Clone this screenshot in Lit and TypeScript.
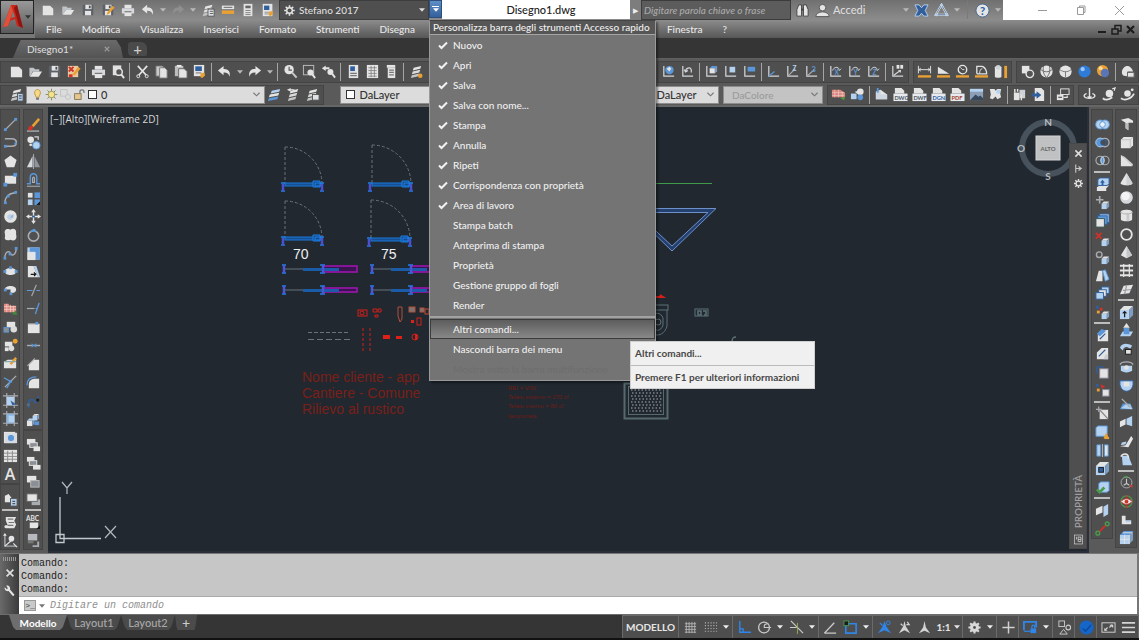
import { LitElement, html, css, svg, nothing, TemplateResult } from "lit";
import { customElement } from "lit/decorators.js";
import { classMap } from "lit/directives/class-map.js";

/* ---- drawing helpers for the 16 x 16 icon set ---- */
const W = "#e4e4e4";
const G = "#a9adb2";
const L = "#b4d2f0";
const B = "#5b97d8";
const D = "#2f5f9e";
const O = "#eaa133";
const R = "#cf3228";
const K = "#1b1b1b";

const P = (d: string, fill = W, stroke = "none", width = 1) =>
  svg`<path d=${d} fill=${fill} stroke=${stroke} stroke-width=${width}></path>`;
const S = (d: string, stroke = W, width = 1.3) => P(d, "none", stroke, width);
const C = (x: number, y: number, r: number, fill = W, stroke = "none", width = 1) =>
  svg`<circle cx=${x} cy=${y} r=${r} fill=${fill} stroke=${stroke} stroke-width=${width}></circle>`;
const Q = (x: number, y: number, w: number, h: number, fill = W, stroke = "none") =>
  svg`<rect x=${x} y=${y} width=${w} height=${h} fill=${fill} stroke=${stroke}></rect>`;
const T = (t: string, x: number, y: number, size: number, fill = W) =>
  svg`<text x=${x} y=${y} font-size=${size} font-weight="700" fill=${fill}>${t}</text>`;

const doc = P("M2 3H10.500L14 6.500V14H2Z");
const brush = P("M9 10l4-1 1 3-3 3-2-1z", O);
const disk = [P("M2 2H14V14H2Z", "#5d6167"), Q(5, 2, 7, 5), Q(4.500, 9, 7, 5), Q(9, 3, 2, 3, "#4c5058")];
const printer = [Q(4, 2, 8, 4), P("M1 6H15V12H1Z", "#d7d9dc"), Q(4, 10, 8, 5), S("M4 10H12", "#777")];
const axes = S("M3 2V13H14", "#d3d6da");
const cube = (x: number, y: number, s: number, front = W, side = L) => [
  P(`M${x} ${y + s * 0.3}h${s * 0.7}v${s * 0.7}h-${s * 0.7}z`, front),
  P(`M${x} ${y + s * 0.3}l${s * 0.3}-${s * 0.3}h${s * 0.7}l-${s * 0.3} ${s * 0.3}z`, side),
  P(`M${x + s * 0.7} ${y + s * 0.3}l${s * 0.3}-${s * 0.3}v${s * 0.7}l-${s * 0.3} ${s * 0.3}z`, "#7f9dc0"),
];
const sheets = [P("M5 4l8-2-1 3-8 2z"), P("M4 8l8-2-1 3-8 2z", "#dcdcdc"), P("M3 12l8-2-1 3-8 2z", "#c6c6c6")];
const gear = [
  S("M8 1.500V14.500M1.500 8H14.500M3.400 3.400L12.600 12.600M12.600 3.400L3.400 12.600", W, 2),
  C(8, 8, 4.300, W),
  C(8, 8, 2.500, "#4f4f4f"),
];
const ruler = P("M1 12H15V14.500H1Z", O);
const tag = (t: string, c: string) => [P("M2 1h7l3 3v3H2z"), Q(0.500, 7, 15, 8, "#e7eaee"), T(t, 1.500, 13.500, 6, c)];

const ICONS: Record<string, unknown> = {
  nuovo: doc,
  apri: [P("M1.500 13V4H6L7.500 5.500H12V8H5L2.500 13Z", "#bfc2c6"), P("M2 13.500L5.500 8H15L11.500 13.500Z")],
  salva: disk,
  salvaNome: [disk, P("M7 11L13 3l2.500 2L9 12.500l-2.500.8z", O)],
  chiudiDis: [Q(2, 2, 11, 12, "#e8c9a0"), S("M3 3l5 5M8 3l-5 5", R, 2), P("M7 11L13 3l2.500 2L9 12.500z", O), Q(3, 11, 4, 3, R)],
  stampa: printer,
  anteprima: [P("M3 1.500H12V12H3Z", "#e0e0e0"), C(9.500, 8.500, 3.600, "#555", W, 1.600), S("M12 11l3 4", W, 2)],
  annulla: [P("M1 7L7 2V5.300C12 5 14.500 8 13.500 13.500C12.500 10 10.500 8.800 7 9V12Z")],
  ripeti: [P("M15 7L9 2V5.300C4 5 1.500 8 2.500 13.500C3.500 10 5.500 8.800 9 9V12Z")],
  ripetiOff: [P("M15 7L9 2V5.300C4 5 1.500 8 2.500 13.500C3.500 10 5.500 8.800 9 9V12Z", "#8f8f8f")],
  gruppo: [sheets, Q(8, 7, 7, 8, "#dfe3e8", "#555"), S("M10 9.500h4M10 12h4", "#555", 1)],
  riga: [P("M1 3H15V7H1Z", W), P("M1 8.500H15V12.500H1Z", O), S("M3 5H13", "#777")],
  calc: [Q(3, 1, 10, 14, W), Q(5, 3, 6, 3, "#666"), S("M5 8.500h6M5 11h6M5 13.200h6", "#777", 1)],
  foglio: [Q(2, 1, 11, 14, W), Q(3.500, 3, 6, 5, D), S("M4 10.500h5M4 12.500h5", "#888", 1), brush],
  ingranaggio: gear,
  taglia: [S("M3 2L12 12M13 2L4 12", W, 1.800), C(3.500, 13, 1.600, "none", W), C(12.500, 13, 1.600, "none", W)],
  copia: [P("M2 2h7l1 1v10H2z", "#c9c9c9", "#666"), P("M6 4h5.500L14 6.500V15H6z", W, "#777")],
  incolla: [Q(2, 2, 9, 11, "#bdbdbd"), Q(4, 1, 5, 2, "#eee"), P("M6 5h6l3 3v7H6z", W, "#666")],
  proprietaCopia: [Q(2, 1, 11, 12, W), Q(3.500, 2.500, 7, 5, D), S("M4 9.500h6", "#888"), brush],
  zoomReal: [C(6.500, 6, 5, W), S("M6.500 3v3.500h3", "#555", 1.200), S("M10 9.500l4.500 5", "#c9c9c9", 2.200)],
  zoomFin: [Q(1.500, 1.500, 11, 10, "none", "#bfbfbf"), C(9, 9, 3.200, W), S("M11 11l3 4", W, 2)],
  zoomPrec: [P("M1 4.500L5 1.500V3.500H9V5.500H5V7.500Z"), C(10, 8.500, 3.200, W), S("M12 10.500l3 4", W, 2)],
  propr: [Q(3, 1, 10, 14, W), Q(4.500, 2.500, 5, 5, D), S("M4.500 10h7M4.500 12.500h7", "#777")],
  centro: [Q(2, 1, 12, 14, W), S("M3.500 4h9M3.500 7h9M3.500 10h9M3.500 13h9M6.500 2v12M10 2v12", "#777", 0.800)],
  tavolozze: [P("M3 1h9v3H3z"), Q(4, 4, 8, 11, W), S("M5.500 6.500h5M5.500 9h5M5.500 11.500h5", "#777")],
  fogliSet: [sheets, C(12, 12.500, 2.400, O)],
  ucs: [axes, C(9, 6.500, 4.500, B), P("M6 5l3-2 2 2-2 3z", W)],
  ucsPrec: [axes, S("M6 8C6 4 11 3 12 6V9M4.500 6L6 8.500L8.500 7", "#d3d6da")],
  ucsFaccia: [axes, cube(6, 2, 8, W, B)],
  ucsOgg: [axes, Q(7, 3, 6, 6, L)],
  ucsVista: [axes, Q(6, 3, 8, 5, B)],
  ucsOrig: [axes, S("M3 13L9 8", B)],
  ucsZ: [axes, S("M3 13L11 5", G), T("Z", 8, 7, 7, L)],
  ucs3: [axes, S("M3 13L11 6", G), T("3", 8, 8, 8, B)],
  rotX: [axes, S("M5 7C6 3 11 2 12 6M10 5l2 2 2-2", "#d3d6da", 1), T("X", 7, 12, 7, B)],
  rotY: [axes, S("M5 7C6 3 11 2 12 6M10 5l2 2 2-2", "#d3d6da", 1), T("Y", 7, 12, 7, B)],
  rotZ: [axes, S("M5 7C6 3 11 2 12 6M10 5l2 2 2-2", "#d3d6da", 1), T("Z", 7, 12, 7, B)],
  ucsAppl: [axes, Q(7, 1, 3, 4), Q(11, 1, 3, 4), S("M4 12l7-5M9 7h2v2", "#d3d6da")],
  dist: [S("M1.500 2V10M14.500 2V10M2 6H14M4 4.500L2 6L4 7.500M12 4.500L14 6L12 7.500", W, 1), ruler],
  raggio: [P("M2 3L14 10.500H2Z"), ruler],
  angolo: [C(8, 6, 4.500, "none", W, 1.500), S("M8 6L5.500 3.500M8 6h2", W, 1), ruler],
  area: [S("M3 10.500V2.500H9M9 2.500C12 4 13.500 7 13.500 10.500H3", W, 1.400), S("M6 10C6 7 7 5.500 9 4.500", W, 1), ruler],
  volume: [P("M2 3.500C2 1.500 9 1.500 9 3.500V13.500C9 15 2 15 2 13.500Z"), C(5.500, 3.500, 2.500, "#cfd3d8"), Q(12, 2, 3, 13, O)],
  wire2d: [Q(2, 2, 8, 8, W), C(10.500, 10.500, 4, "#555", W, 1.500)],
  wire3d: [C(8, 8, 6.500, W), S("M2 6C6 9 10 9 14 6M8 14.500C4 10 4 6 5 2M8 14.500C12 10 12 6 11 2", "#666", 1)],
  nascosto: [C(8, 8, 6.500, W), S("M2 6C6 9 10 9 14 6M8 14V8", "#777", 1)],
  realistico: [C(8, 8, 6.500, "#2f7bd8"), C(6, 5.500, 2.200, "#9cc6f5")],
  concettuale: [C(7, 7, 6, O), C(9.500, 9.500, 4.500, "#5a74b8"), C(5, 4.500, 2, "#f8dc9a")],
  gestVis: [P("M2 9C2 4 6 2 8 2S13 4 14 8H8V13C4 13 2 12 2 9Z"), Q(8, 9, 7, 5, W, "#666")],
  layer: [sheets, Q(9, 7, 6, 8, L, "#555"), S("M10.500 9.500h3M10.500 12h3", "#555")],
  layOgg: [P("M5 4l9-2-1 3-9 2z", L), P("M3 8l10-2-1 3-10 2z"), P("M2 12l10-2-1 3-10 2z", B)],
  layPrec: [sheets, P("M1 3l4-2v4z", W), S("M4 3h5", W)],
  layStati: [sheets, Q(8, 8, 7, 6, "#dfe3e8", "#555")],
  lampada: [P("M4.500 6C4.500 0.500 11.500 0.500 11.500 6C11.500 8.500 10 9 9.700 11.500H6.300C6 9 4.500 8.500 4.500 6Z", "#f7d98a", "#b98a2c"), Q(6.300, 12, 3.500, 2.500, "#777")],
  sole: [S("M8 .8V15.200M.8 8H15.200M3 3L13 13M13 3L3 13", "#8a8f5a", 1.200), C(8, 8, 4, "#f7e28a", "#8a8f5a")],
  congela: [Q(2, 2, 8, 8, "none", "#bdbdbd"), C(11, 11, 3, "#ddd", "#bdbdbd")],
  lucchetto: [Q(2, 7, 8, 7, "#e7c58c", "#7a6a4a"), S("M8.500 7V4.500C8.500 1.500 13.500 1.500 13.500 4.500V6", "#777", 1.500)],
  tratteggioEd: [P("M1 3h9l5 3v5H1z", "#d9867e"), S("M1 6h13M1 9h13M4 3v8M8 3v8M12 5v6", "#f2c9c5", 0.700), P("M10 12l5-2-1 4z", "#4e9a3f")],
  polEd: [Q(1, 7, 6, 6, L), C(11, 5, 3.500, W), C(11, 11, 3, B), P("M5 5l4-1v4z", W)],
  xr: [P("M2 5L7 3L14 8V13H2Z"), P("M2 5L7 3V8H14V13H2Z", "#cdd6e0"), Q(3, 1, 2, 5, B)],
  dwf: tag("DWG", "#4a5868"),
  dwfx: tag("DWF", "#4a5868"),
  dgn: tag("DGN", "#2a5fa8"),
  pdf: tag("PDF", "#a03c2a"),
  immagine: [Q(1, 2, 14, 12, "#8c9fb6"), P("M1 14L7 8L10 10.500L12 9L15 12V14Z", "#39495c"), Q(1, 2, 14, 3, L)],
  nuvola: [P("M2 2h5l1 2 2-2h4l-1 5 1 4-4 2-2-3-3 3-3-1 1-4z"), Q(9, 3, 4, 4, L)],
  blocco: [Q(2, 6, 6, 8, W), Q(8, 3, 6, 9, "#cfd3d8"), S("M3 2v4M6 2v3M10 8v6", W, 1.500)],
  export: [P("M4 1h7l3 3v11H4z"), P("M1 7H6V4.500L11 8.500L6 12.500V10H1Z", D)],
  ritaglio: [Q(6, 2, 9, 6, "none", W), Q(2, 8, 7, 6, W), S("M9 11h4V9", W), S("M3.500 11h4", "#555")],
  orbita: [S("M8 1V12M8 12l-2-2M8 12l2-2", W, 1.500), S("M5 7C1 8 1 12 8 12S15 8 11 7", W, 1.500)],
  orbita2: [C(9, 7, 4, W), S("M2 12C4 14 8 14 12 11", W, 2), S("M12 2l3-1-1 3", W)],
  orbita3: [C(8, 7, 3.500, W), S("M1 12C5 15 12 13 15 7", W, 1.700), C(13, 3, 1.500, W)],
  /* draw column */
  linea: [S("M2 14L14 2", G, 1.500), Q(1, 12, 3, 3, B), Q(12, 1, 3, 3, B)],
  polilinea: [S("M2 4H9C16 4 16 12 9 12H2", G, 1.700), Q(1, 10.500, 3, 3, B), C(13.500, 9, 1.400, B)],
  poligono: P("M8 1.500L14.500 6.500L12 14H4L1.500 6.500Z"),
  rettangolo: [Q(2, 4, 12, 8.500), Q(11, 1, 4, 4, B), Q(0.500, 11.500, 4, 4, B)],
  arco: [S("M2 14C2 7 7 3 14 3", G, 1.500), Q(1, 12, 3, 3, B), Q(12, 1, 3, 3, B), Q(4, 5, 3, 3, B)],
  cerchio: [C(8, 8, 6.700), C(7.500, 8.500, 3, "#bcd0e6"), P("M7.500 9L11 5V9Z", "#8fb4de")],
  rev: P("M2 4C3 1 7 2 8 3C10 1 14 2 14 5C13.500 8 15 10 14 12C13 15 10 14.500 8 13.500C5 15 1 14 2 11C3 9 1 6 2 4Z"),
  spline: [S("M2 13C2 5 7 5 8 8S14 10 14 3", G, 1.500), Q(.5, 11.500, 3, 3, B), Q(12.500, 1, 3, 3, B), Q(6, 7, 3, 3, B)],
  ellisse: [P("M2 8C2 3 14 3 14 8S2 13 2 8Z"), Q(.5, 6.500, 3, 3, B), Q(12.500, 6.500, 3, 3, B), Q(6.500, 2.500, 3, 3, B)],
  arcoEll: [P("M2 8C2 3 14 3 14 8C14 11 11 12 8 12V8H2Z"), Q(1, 7, 3, 3, B), Q(7, 11, 3, 3, B)],
  tratteggio: [P("M1 3h5l1 2h7v7H1z", "#e08a80"), S("M1 6h13M1 9h13M4 3v9M8 4v8M11 5v7", "#f6d6d2", .7), P("M9 14l5-4 1 5z", "#3c8a3a")],
  insBlocco: [Q(4, 3, 9, 6), C(11.500, 11, 3.500, "#dcdcdc"), Q(1, 9, 5, 5, "#8a8f95", B)],
  creaBlocco: [Q(2, 4, 8, 5), C(9, 11, 3, "#dcdcdc"), Q(2, 10, 4, 4, W), C(13, 3.500, 2.600, O)],
  regione: [P("M1 6l4-2h9v9H1z"), P("M7 8L13 1l2 2-6 6.500z", O), S("M1 6h13", "#8aa")],
  lineaC: [S("M2 14L14 2", G, 1.500), S("M1 4L8 8L4 15", B, 1.500), C(8, 8, 1.700, B)],
  confine: [S("M4 0V16M12 0V16M0 3H16M0 13H16", G, 1.200), Q(4, 4, 8, 9, L), P("M8 8l6 4-4 1z", D)],
  confine2: [S("M4 0V16M12 0V16M0 3H16M0 13H16", G, 1.200), Q(4, 3, 8, 10, "#8ab4e2"), Q(6, 5, 6, 7, L)],
  copertura: [Q(1, 2, 12, 12), Q(2, 3, 13, 11, "#d8dce2"), C(8.500, 8.500, 4, B, W)],
  tabella: [Q(1, 2, 14, 13), S("M1 5.500h14M1 9h14M1 12h14M5 3v12M10 3v12", "#8a8a8a", 1)],
  aggSel: [P("M2 4l4-2 3 4v5H2z"), Q(8, 7, 7, 8, L, "#555"), S("M10 10h3M10 12.500h3", "#555")],
  scorri: [P("M3 2h11l-2 4 2 4-2 4H3C1 14 1 11 3 11h2L3 6z"), S("M5 4.500h6M6 8h6M5 11h6", "#777")],
  assi: [S("M2 1V14H14", G, 1.500), C(9, 6, 3, W), S("M2 14L9 8M11 11l4 4", W), P("M2 0l2 3H0z", W)],
  /* modify column */
  cancella: [S("M1 15H14", G, 1.500), P("M6 9L13 1l2 2-7 8z", O), P("M3 10l3-1 2 2-2 3H2z", R)],
  copiaO: [C(5, 5, 3.500), C(11, 11, 4, L, B), C(5, 10.500, 1.500, W), S("M9 2h4v3", "#d3d6da")],
  specchio: [P("M7 2V14H1Z", "#d6d9dd"), P("M9 2V14H15Z", "#8f959c"), S("M8 0V16", G, 1)],
  offset: [S("M1 12.500h3.500V6C4.500 .5 11.500 .5 11.500 6V12.500H15", B, 1.500), S("M1 15.200h14M7 11V7C7 5 9 5 9 7V11z", G, 1.300)],
  serie: [Q(2, 2, 5, 5, W), Q(9, 1.500, 6, 6, B), Q(2, 9, 5, 6, L), Q(9, 9, 6, 6, B), P("M15 11V15H11Z", K)],
  sposta: [P("M8 0L10.500 3.500H5.500ZM8 16L5.500 12.500H10.500ZM0 8L3.500 5.500V10.500ZM16 8L12.500 10.500V5.500Z"), S("M8 3V13M3 8H13", W, 1.500), S("M6.500 8h3", D, 2)],
  ruota: [C(8, 8.500, 5.500, "none", G, 1.700), S("M5 4C7 2.500 9 2.500 11 4", B, 1.700), Q(7, 1, 3, 3, B)],
  scala: [Q(1.500, 1.500, 13, 13, L), P("M4 1.500H14.500V14.500H10V6H4Z", B), Q(1.500, 6.500, 8.500, 8.500)],
  stira: [P("M2 2h6l5 12H2z"), P("M8 2h3l4 12h-2z", L), S("M5 11h5M8.500 9l2 2-2 2", K)],
  taglia2: [S("M1 8H7M11 8H15", B, 1.300), S("M11 2L6 14", G, 1.300)],
  estendi: [S("M1 8H9", G, 1.300), S("M14 2L10 14", B, 1.500), S("M10 8h2", B)],
  spezza: [Q(2, 4, 12.500, 10), Q(10, 2, 3, 3, B), S("M2 4h8", "#999")],
  unisci: [S("M1 8H15", G, 1.500), P("M6 5.500L9 8L6 10.500ZM11 5.500L8 8L11 10.500Z", B)],
  cima: [P("M3 14V8L8 3H14V14Z"), S("M1.500 9.500L9.500 1.500", G, 1.200)],
  raccorda: [P("M3 14V10C3 6 6 4 10 4H14V14Z"), S("M1 11C1 5 5 2 11 2", B, 1.500)],
  fusione: [S("M3 15V9C4 5 8 5 9 8S13 8 13 2", D, 1.700), Q(1, 10, 3, 3, "#5b6b80"), Q(11, 5, 3, 3, K)],
  esplodi: [cube(1, 7, 8, W, L), cube(7, 2, 7, L, W), P("M9 10h5v4H9z", B)],
  ordine1: [Q(1, 1, 9, 6), Q(4, 5, 8, 5, "#8b9096", W), Q(8, 9, 7, 5, W)],
  ordine2: [Q(1, 1, 8, 5), Q(3.500, 5, 8, 5, "#8b9096", W), Q(7.500, 9.500, 8, 5, W)],
  ordine3: [Q(1, 2, 10, 7), Q(5, 7, 9, 7, "#8b9096", "#bbb")],
  ordine4: [Q(6, 8, 9, 6, "#a9adb2"), Q(1, 2, 11, 8, W, "#666")],
  ordTesto: [T("ABC", 0, 6.500, 7), Q(4, 8, 9, 6), P("M15 11V15H11Z", K)],
  ordTratt: [Q(2, 1, 10, 7, "#b6babf"), Q(2, 8, 6, 3, "#777"), S("M7 14h6V9", G, 2)],
  /* solid editing column */
  unione: [C(5.500, 8, 4.800, L, B), C(10.500, 8, 4.800, L, B), C(8, 8, 3, "#e9f2fb", B)],
  sottrai: [C(10.500, 8, 4.500, "none", G, 1.400), C(5.500, 8, 4.700, B, L), C(9, 8, 3, "#4a4d52", D)],
  interseca: [C(5.500, 8, 4.500, "none", G, 1.200), C(10.500, 8, 4.500, "none", G, 1.200), P("M8 4C10 6 10 10 8 12C6 10 6 6 8 4Z", B, L)],
  estrFaccia: [P("M2 11l3-2h10l-3 3v3H2z", W), P("M3 3l2-2h10v6l-2 2H3z", L, D), P("M8 3l2.500 3H9v3H7V6H5.500z", D)],
  spostaFaccia: [S("M5 1V9M1 5H9", G, 1.700), cube(7, 7, 8, L, W)],
  offFaccia: [Q(5, 1, 10, 9, L, D), Q(3, 3, 10, 9, B, D), Q(1, 6, 9, 9, W, "#355")],
  elimFaccia: [S("M1 1l6 6M7 1L1 7", R, 2), cube(7, 7, 8, L, W)],
  ruotaFaccia: [C(4.500, 5, 3, "none", G, 1.500), cube(7, 7, 8, L, W)],
  rastrema: [P("M1 14L4 3H8V14Z"), P("M8 3L11 2L15 12L11 14Z", L, B)],
  copiaFaccia: [Q(7, 1, 8, 7, L, D), Q(4, 4, 8, 7, W, D), Q(1, 7, 8, 7, L, D)],
  coloraFaccia: [Q(1, 1, 3, 3, D), Q(5, 3, 3, 3, R), Q(2, 6, 3, 3, O), cube(7, 7, 8, L, W)],
  raccSp: [P("M3 14V7L8 2H14V14Z", W), P("M2 6L7 1L12 3L5 9Z", B), S("M5 12l6-6", D)],
  cimaSp: [P("M2 14V7L7 2H14V14Z", W), S("M4 11l7-7", D, 1.200), P("M11 9h3v5H9z", "#c9ced5")],
  copiaSp: [Q(5, 4, 9, 10, W, "#889"), S("M2 2h8M2 2v7", D, 1.500)],
  colSp: [Q(1, 1, 3, 3, D), P("M6 1l5 3-4 2z", R), Q(2, 6, 3, 3, O), Q(8, 7, 7, 7, W, "#889")],
  imprimi: [Q(5, 4, 9, 10, W), S("M5 4l9 10", "#888"), S("M1 3.500h6M4 .5v6", G, 1.300)],
  pulisci: [P("M1 3l2-2h10v9l-2 2H1z", L, B), P("M12 8l3 6h-6z", O), Q(10, 13, 5, 2, O)],
  separa: [P("M2 2h4v12H2z", L, B), P("M10 2h4v12h-4z", W, B), S("M8 1V15", G)],
  guscio: [cube(1, 1, 14, L, W), Q(4, 7, 5, 5, D, K)],
  verifica: [P("M4 4l2-2h9v9l-2 2H4z", L, B), P("M1 11l2-2 2 2 4-4 2 2-6 6z", "#4b9a4e")],
  estraiIso: [P("M1 6l7-3v7l-7 3z"), P("M9 4l5-3v11l-5 3z", L)],
  torsione: [C(3, 13, 2, "none", "#4b9a4e", 1.500), C(13, 3, 2, "none", "#4b9a4e", 1.500), S("M5 11l6-6", R, 2)],
  /* modeling column */
  polisolido: [P("M2 3l8-2 5 3v2H10v8l-3-2V6z"), P("M7 6l3 1v7l-3-2z", "#bbb")],
  box: [P("M2 5L5 2H15V11L12 14H2Z"), S("M2 5H12V14M12 5L15 2", "#b5b8bc", .8)],
  cuneo: [P("M2 2L14 12V14H2Z"), P("M2 2l4 2 9 8-1 2z", "#cfcfcf")],
  cono: [P("M8 1L14.500 12C13 15 3 15 1.500 12Z"), P("M8 1L8 14C12 14.500 13.500 13.500 14.500 12Z", "#cfd1d4")],
  sfera: [C(8, 8, 6.700, "#d5d7da"), C(7, 6.500, 4.500, "#f3f3f3")],
  cilindro: [P("M2 4C2 1 14 1 14 4V12C14 15 2 15 2 12Z"), P("M8 6h3v8H8z", "#c6c8cb"), S("M2 4C2 7 14 7 14 4", "#bbb")],
  toro: C(8, 8, 5.700, "none", W, 1.900),
  piramide: [P("M8 1L14 11L8 14L2 11Z"), P("M8 1L14 11L8 14Z", "#c4c6c9")],
  elica: [S("M1 3h14M1 8h14M1 13h14", W, 2.200), S("M5 1v14M11 1v14", W, 1.300)],
  planare: [P("M5 4L15 3L11 12L1 13Z"), S("M4 9l9-1M8 4L6 13", "#9a9da1")],
  estrudi: [cube(1, 1, 14, L, W), S("M6 13V7M4 9l2-2 2 2", K)],
  premi: [P("M1 14l3-5h11l-3 5z", L), Q(5, 5, 6, 7, B), P("M8 0l3.500 5h-7z", W)],
  sweep: [P("M1 6C3 1 9 1 14 4L12 7C8 4 5 5 4 9Z", L), Q(7, 8, 6, 5, W, K)],
  rivoluz: [S("M1 5C3 1 13 1 15 5", G, 1.500), P("M2 6h12v5C12 14 4 14 2 11z", L), C(8, 8, 2.500, W)],
  loft: [P("M1 3h14v4C14 12 11 14 8 14S2 12 1 7z", L, D), Q(5, 4, 6, 5, W)],
  seziona: [P("M1 13l3-6h8l3 6z", B), P("M2 12l5-4h5l2 5z", L), S("M3 2l9 9", G, 1.500)],
  ispess: [P("M1 7l6-3v6l-6 3z"), P("M8 4l6-3v11l-6-2z", L)],
  piega: [P("M1 13l6-1 6-10 2 3-5 9z"), P("M3 9l5-1-1 3-5 1z", L)],
  solidoSup: [P("M3 4h7l4 10H4z", L), S("M2 5C4 1 11 1 10 7", W, 1.700)],
  gizmo1: [C(8, 8, 5.800, "none", G, 1), S("M8 9V4M8 9l3 2M8 9l-3 2", "#c9c9c9", 1.200), P("M11 11l4 0-1 3z", R), Q(6, 1, 3, 2, "#4b9a4e")],
  gizmo2: [C(8, 8, 6, "none", "#4b9a4e", 1.200), P("M2 8C5 4 11 4 14 8C11 12 5 12 2 8Z", W, R), C(8, 8, 2, R), S("M8 1v3M8 12v3", R, 1.500)],
  lPiccola: [P("M3 4h4v5h6v4H3z", W), P("M7 9h6l-1 2H7z", L)],
  mesh: [cube(1, 1, 14, L, B), S("M1 10h10M6 5v10M4 3h10M11 5V15", W, 1)],
  /* title bar */
  binocolo: [P("M2 14V7L4 2H7V14ZM9 14V2H12L14 7V14Z", "#e4e4e4", "#444"), S("M6.500 7h3", "#444", 2)],
  utente: [C(8, 5, 3.500, W, "#555"), P("M1 14.500C1 10.500 6 9.500 8 9.500S15 10.500 15 14.500Z", W, "#555")],
  exchange: [P("M1 2h4.500L8 5l2.500-3H15l-3 6 3 6h-4.500L8 11l-2.500 3H1l3-6z", "#335e9c", L)],
  a360: [P("M8 2L14 12.500H2Z", "none", W, 2.200), P("M8 2L14 12.500H2Z", "none", D, .8), C(8, 2.500, 1.600, L), C(2.500, 12.500, 1.600, L), C(13.500, 12.500, 1.600, L)],
  aiuto: [C(8, 8, 7, W, "#44648c"), T("?", 5.200, 12.500, 12, "#1f5fae")],
  /* status bar */
  griglia: S("M3.500 2V14M6.500 2V14M9.500 2V14M12.500 2V14M2 4H14M2 7H14M2 10H14M2 13H14", "#b9b9b9", .9),
  snap: svg`<path d="M2 3H15M2 6H15M2 9H15M2 12H15" stroke="#b0b0b0" stroke-width="1.200" stroke-dasharray="1.200 1.800"></path>`,
  orto: S("M3 1V13H15M3 9.500H6.500V13", "#2f86e8", 1.500),
  polare: [C(7.500, 8, 5.800, "none", "#c9c9c9", 1.400), S("M7.500 8H15M7.500 8C8 5 8 4 12 4", "#c9c9c9", 1.200)],
  iso: [S("M2 1L15 14M1 8L8 8", "#c9c9c9", 1.300), S("M9 3V15", "#8fb04e", 1)],
  otrack: S("M1.500 14L12 3M1.500 14H14", "#c9c9c9", 1.500),
  osnap: [P("M3 4H14V14H3Z", "none", "#2f86e8", 1.800), Q(1, 1, 5, 5, K, "#4b9a4e")],
  annA: [P("M8 1L10 7L15 14L8 11L1 14L6 7Z", "#2f86e8"), C(12, 3, 2, "none", "#2f86e8"), S("M3 3l3 3", "#2f86e8")],
  annB: [P("M8 1L9.500 7L14 14L8 11L2 14L6.500 7Z", "#d3d3d3"), S("M11 2l2 3h-3M4 4l2 2", "#d3d3d3")],
  annC: P("M8 1L9.500 8L14 14L8 11.500L2 14L6.500 8Z", "#d3d3d3"),
  opzioni: [S("M8 1.500V14.500M1.500 8H14.500M3.400 3.400L12.600 12.600M12.600 3.400L3.400 12.600", "#d8d8d8", 2.200), C(8, 8, 4.800, "#d8d8d8"), C(8, 8, 1.500, "#4e4e4e")],
  piu: S("M8 1.500V14.500M1.500 8H14.500", "#d0d0d0", 1.600),
  unita: [P("M1 11V2H14V8", "none", "#2f86e8", 2), S("M1 12H8", "#2f86e8"), Q(8, 9, 6, 5, "#2f86e8"), S("M9.500 9V7C9.500 5 12.500 5 12.500 7V9", "#2f86e8", 1.300)],
  isola: [Q(2, 1, 6, 6, "none", "#c9c9c9"), C(12, 8, 2.500, "none", "#c9c9c9", 1.200), P("M7 10l4 5H3z", "none", "#c9c9c9")],
  gpu: [C(8, 8, 7.500, "#1566c8"), S("M4 9l3 3 6-7", "#0d4a9c", 1.500)],
  schermo: [Q(1, 3, 14, 10, "none", "#d5d5d5"), P("M3.500 8.500v3h3.500zM9 5h4v3.500z", "#d5d5d5"), S("M4 11l3-3M9 8l3-3", "#d5d5d5")],
  menu: S("M1 3H15M1 8H15M1 13H15", "#d5d5d5", 1.800),
  chiave: [P("M1 3C0 6 3 9 6 8l6 7 2-2L8 6C9 3 6 0 3 1l2 3-1 2z", "#e4e4e4")],
  chiudi: S("M3.500 3.500L12.500 12.500M12.500 3.500L3.500 12.500", "#e0e0e0", 2.200),
  pin: [S("M4 2V14M4 8H11M8 5l4 3-4 3", "#c9c9c9", 1.600)],
  pannello: [Q(2, 1.500, 12, 13, "none", "#d0d0d0"), S("M5 4v4M7.500 4v7h4V4.500H7.500M7.500 8h4", "#d0d0d0", 1.200)],
};

const icon = (name: string) =>
  html`<svg class="ico" viewBox="0 0 16 16" aria-hidden="true">${ICONS[name]}</svg>`;

const DOWN = html`<svg class="down" viewBox="0 0 7 4" aria-hidden="true"><path d="M0 0H7L3.500 4Z" fill="currentColor"></path></svg>`;
const CHECK = html`<svg class="check" viewBox="0 0 10 10" aria-hidden="true"><path d="M1 5.500L3.500 8L9 2.500" fill="none" stroke="#f2f2f2" stroke-width="2"></path></svg>`;

/* "|" is a separator, "v" a drop-down arrow */
const tools = (list: string): TemplateResult[] =>
  list.split(" ").map((n) =>
    n === "|"
      ? html`<span class="sep"></span>`
      : n === "v"
        ? html`<button class="arrow" aria-label="Altre opzioni">${DOWN}</button>`
        : n === "A"
          ? html`<button class="tool glyph" aria-label="Testo multilinea">A</button>`
          : html`<button class="tool" aria-label=${n}>${icon(n)}</button>`
  );

const MENU_BAR = ["File", "Modifica", "Visualizza", "Inserisci", "Formato", "Strumenti", "Disegna"];

const QUICK_ACCESS: { text: string; on?: boolean }[] = [
  { text: "Nuovo", on: true },
  { text: "Apri", on: true },
  { text: "Salva", on: true },
  { text: "Salva con nome...", on: true },
  { text: "Stampa", on: true },
  { text: "Annulla", on: true },
  { text: "Ripeti", on: true },
  { text: "Corrispondenza con proprietà", on: true },
  { text: "Area di lavoro", on: true },
  { text: "Stampa batch" },
  { text: "Anteprima di stampa" },
  { text: "Proprietà" },
  { text: "Gestione gruppo di fogli" },
  { text: "Render" },
];

/* a door leaf in plan: hinge at (x, y), swing radius r */
const door = (x: number, y: number, r: number) => svg`
  <path d="M${x} ${y - r}V${y}M${x} ${y - r}A${r} ${r} 0 0 1 ${x + r} ${y}" fill="none" stroke="#6b7278" stroke-dasharray="3 2"></path>
  <rect x=${x} y=${y - 1} width=${r - 8} height="3" fill="#174f93" stroke="#1b78d8"></rect>
  <path d="M${x + r - 9} ${y - 3}h7v6h-7zM${x + r - 7} ${y - 1}h6v3h-6z" fill="#164a8a" stroke="#1a80e6"></path>
  <path d="M${x - 4} ${y - 1}h4M${x - 4} ${y + 7}h4M${x + r - 2} ${y - 1}h4M${x + r - 2} ${y + 7}h4" stroke="#1e7fe8" stroke-width="1.500"></path>
  <path d="M${x - 2} ${y}v7M${x + r} ${y}v7" stroke="#4a50d0" stroke-width="2.500"></path>`;

/* a sliding door in plan */
const slide = (x: number, y: number, len: number, h: number) => svg`
  <path d="M${x} ${y}H${x + 20}" stroke="#6b7278"></path>
  <rect x=${x + 39} y=${y - h} width=${len} height=${h * 2} fill="#3a1450" stroke="#a314b4" stroke-width="1.500"></rect>
  <rect x=${x + 19} y=${y - 1} width="36" height="3" fill="#1a5ca8"></rect>
  <path d="M${x - 2} ${y - 4}h4M${x - 2} ${y + 4}h4M${x + 36} ${y - 4}h5M${x + 36} ${y + 4}h5" stroke="#1e7fe8" stroke-width="1.500"></path>
  <path d="M${x} ${y - 4}v8M${x + 39} ${y - 4}v8" stroke="#4a58d8" stroke-width="2.500"></path>`;

@customElement("app-root")
export class AppRoot extends LitElement {
  static styles = css`
    :host {
      display: flex;
      flex-direction: column;
      height: 100vh;
      min-height: 600px;
      overflow: hidden;
      background: #5a5a5a;
      color: #e4e4e4;
      font: 500 10px/14px Lato, "Open Sans", sans-serif;
    }
    * { box-sizing: border-box; }
    button, select, input { font: inherit; color: inherit; border: 0; margin: 0; padding: 0; background: none; border-radius: 0; }
    button { display: inline-flex; align-items: center; justify-content: center; flex: none; }
    .ico { width: 15px; height: 15px; display: block; flex: none; }
    .down { width: 6px; height: 4px; display: block; flex: none; }
    .tool { width: 19px; height: 20px; }
    .glyph { font: 600 16px/18px "Open Sans", sans-serif; }
    .arrow { width: 11px; height: 20px; color: #b9b9b9; }
    .sep { flex: none; width: 5px; height: 18px; background: linear-gradient(90deg, transparent 2px, #a5a5a5 2px, #a5a5a5 3px, transparent 3px); }
    .grow { flex: 1; }

    /* title and menu */
    .head { display: grid; grid-template: 20px 18px / 35px 1fr; flex: none; background: #777; }
    .app { grid-row: 1 / 3; height: 34px; width: 34px; border: 1px solid #222; background: linear-gradient(#989898, #5a5a5a); gap: 1px; color: #333; }
    .logo { width: 21px; height: 26px; }
    .title { display: flex; align-items: stretch; background: linear-gradient(#707070, #8c8c8c); min-width: 0; }
    .quick { display: flex; align-items: center; padding-left: 3px; flex: none; width: 244px; }
    .quick .tool { width: 20px; }
    .quick .arrow { width: 10px; }
    .quick .ico { width: 14px; height: 14px; }
    .work { display: flex; align-items: center; width: 150px; flex: none; background: #4f4f4f; border: 1px solid #3d3d3d; padding: 0 3px; gap: 3px; color: #dedede; }
    .work .ico { width: 13px; height: 13px; }
    .work select { flex: 1; appearance: none; min-width: 0; }
    .anchor { position: relative; z-index: 5; display: flex; }
    .custom { width: 13px; height: 18px; background: linear-gradient(#5f8ec6, #33609c); color: #fff; border: 1px solid #2f4f7a; flex-direction: column; gap: 1px; }
    .custom::before { content: ""; width: 7px; height: 1px; background: #fff; }
    .file { flex: 1; background: #fff; color: #222; margin: 0; font: inherit; font-size: 11px; line-height: 19px; text-align: center; padding-left: 10px; height: 19px; min-width: 0; }
    .play { width: 11px; background: #7d7d7d; color: #eee; font-size: 7px; }
    .search { width: 150px; background: #5c5c5c; border: 1px solid #3c3c3c; padding: 0 2px; font-style: italic; color: #a9a9a9; }
    .search::placeholder { color: #a9a9a9; opacity: 1; }
    .user { display: flex; align-items: center; padding-left: 1px; }
    .user .tool { width: 20px; }
    .user .sep { width: 10px; background: linear-gradient(90deg, transparent 5px, #7a7a7a 5px, #7a7a7a 6px, transparent 6px); }
    .sign { width: 68px; justify-content: flex-start; padding-left: 1px; color: #dcdcdc; font-size: 11px; }
    .win { display: flex; background: #fff; width: 136px; justify-content: space-around; color: #9a9a9a; padding-left: 20px; }
    .win button { width: 36px; }
    .win svg, .child svg { width: 11px; height: 11px; }
    .bar { display: flex; align-items: center; padding-left: 11px; background: linear-gradient(#8c8c8c, #575757); min-width: 0; gap: 20px; color: #e8e8e8; }
    .bar button { height: 17px; }
    .under { width: 212px; flex: none; }
    .child { display: flex; margin-left: auto; color: #1d1d1d; padding-right: 3px; gap: 3px; }

    /* document tabs */
    .docs { display: flex; align-items: flex-end; flex: none; height: 21px; background: #353535; padding-left: 13px; gap: 5px; border-bottom: 1px solid #606060; }
    .doc { width: 110px; height: 18px; justify-content: space-between; padding: 0 12px 0 14px; font-size: 10px; color: #dadada; background: linear-gradient(#6a6a6a, #545454); clip-path: polygon(7% 0, 94% 0, 98% 40%, 100% 100%, 0 100%, 4% 40%); }
    .doc .ico { width: 8px; height: 8px; opacity: .45; }
    .add { width: 19px; height: 14px; background: #4a4a4a; color: #ccc; border-radius: 3px 6px 2px 4px; font-size: 15px; margin-bottom: 2px; }

    /* toolbars */
    .row { display: flex; flex: none; align-items: center; background: #5a5a5a; padding: 1px 0; gap: 4px; }
    .row1 { height: 25px; }
    .row2 { height: 23px; border-bottom: 2px solid #666; }
    .set { display: flex; align-items: center; background: #4f4f4f; border: 1px solid #444; height: 22px; padding: 0 1px; min-width: 0; }
    .row1 .main { padding-left: 6px; border-right: 0; }
    .row1 .main .sep { width: 6px; }
    .row2 .set { height: 20px; }
    .row1 .right, .row2 .right { flex: none; }
    .wide { padding-left: 6px; flex: 2 1 320px; }
    .triple { flex: 3 1 372px; display: flex; gap: 4px; margin-left: 12px; min-width: 0; }
    .combo { display: flex; align-items: center; flex: 1; height: 18px; min-width: 0; background: #dcdcdc; color: #333; padding: 0 4px; gap: 1px; font-size: 11px; border: 1px solid #8d8d8d; }
    .combo .ico { width: 13px; height: 13px; }
    .combo select { appearance: none; flex: 1; min-width: 0; padding-left: 2px; }
    .combo .chev { width: 7px; height: 5px; flex: none; }
    .swatch { width: 9px; height: 9px; border: 1px solid #333; background: #fff; flex: none; margin: 0 1px; }
    .combo.late select { padding-left: 56px; }
    .combo.off { background: #c3c3c3; color: #8a8a8a; flex: none; width: 100px; font-size: 10px; padding-left: 6px; }

    /* work area */
    .mid { display: flex; flex: 1; min-height: 0; }
    .cols { display: flex; gap: 3px; flex: none; }
    .cols.l { width: 48px; padding: 2px 2px 3px 0; }
    .cols.r { width: 50px; padding: 2px 3px 5px 2px; gap: 2px; }
    .cols.r .set { width: 22px; }
    .col { display: flex; flex-direction: column; }
    .col .set { flex-direction: column; width: 20px; height: auto; padding: 5px 0 0; }
    .col .stretch { flex: 1; }
    .col .tool { width: 18px; height: 18px; }
    .col .stretch .tool { flex: 1 1 0; min-height: 0; }
    .col .sep { width: 16px; height: 5px; background: linear-gradient(transparent 1px, #bdbdbd 1px, #bdbdbd 3px, transparent 3px); }
    .first { margin-bottom: 9px; }
    .canvas { position: relative; flex: 1; min-width: 0; background: #212830; overflow: hidden; border: solid #2b2f3a; border-width: 0 2px 2px 0; }
    .plan { position: absolute; inset: 0; width: 100%; height: 100%; font-family: "Liberation Sans", sans-serif; }
    .view { position: absolute; left: 2px; top: 5px; font: 10px/14px "Open Sans", sans-serif; color: #d6d6d6; }
    .axes { position: absolute; left: 6px; bottom: 6px; width: 70px; height: 68px; }
    .cube { position: absolute; right: 6px; top: 6px; width: 68px; height: 72px; }
    .palette { position: absolute; right: 0; top: 36px; bottom: 2px; width: 18px; background: #4f4f4f; display: flex; flex-direction: column; align-items: center; padding: 3px 0; gap: 3px; border: 1px solid #484848; }
    .palette button { height: 12px; }
    .palette .ico { width: 11px; height: 11px; }
    .vert { writing-mode: vertical-rl; transform: rotate(180deg); color: #a5a5a5; margin: auto 0 3px; font-size: 10px; }

    /* command line */
    .cmd { display: grid; grid-template-columns: 19px 1fr; flex: none; border-top: 1px solid #777; border-right: 2px solid #777; font: 10px/13px "Liberation Mono", monospace; color: #222; }
    .grip { grid-row: 1 / 3; background: linear-gradient(90deg, #6a6a6a, #3b3b3b); display: flex; flex-direction: column; align-items: center; gap: 6px; padding-top: 3px; }
    .grip::before { content: ""; width: 14px; height: 4px; background: repeating-linear-gradient(90deg, #999 0 1px, transparent 1px 2px); }
    .grip .ico { width: 12px; height: 12px; }
    .hist { background: #c6c6c6; padding: 3px 2px 0; height: 43px; border-bottom: 1px solid #aaa; }
    .line { display: flex; align-items: center; background: #fff; height: 17px; padding-left: 5px; gap: 3px; color: #777; }
    .prompt { width: 12px; height: 11px; background: #c9c9c9; border: 1px solid #999; font-size: 8px; line-height: 9px; color: #333; }
    .line input { flex: 1; font-style: italic; color: #333; padding-left: 2px; }
    .line input::placeholder { color: #8f8f8f; opacity: 1; }

    /* bottom */
    .foot { display: flex; flex: none; height: 26px; background: #353535; border-bottom: 2px solid #111; border-top: 1px solid #6d6d6d; padding-left: 9px; align-items: stretch; }
    .sheet { height: 15px; width: 54px; background: #4b4b4b; color: #a9a9a9; clip-path: polygon(0 0, 100% 0, 93% 80%, 88% 100%, 12% 100%, 7% 80%); font-size: 11px; }
    .sheet.on { background: #6e6e6e; color: #fff; font-weight: 700; width: 58px; font-size: 10px; }
    .sheet.plus { width: 22px; font-size: 14px; color: #ccc; }
    .status { display: flex; margin-left: auto; background: #4e4e4e; color: #e6e6e6; }
    .cell { display: flex; align-items: center; border: 1px solid #6a6a6a; border-width: 1px 1px 0 0; padding: 0 0 0 1px; }
    .cell .tool { width: 20px; }
    .cell .arrow { width: 12px; color: #eee; }
    .model { width: 57px; font-size: 10px; font-weight: 700; border: 1px solid #6a6a6a; border-bottom: 0; }
    .scale { width: 28px; gap: 3px; font-weight: 700; }

    /* drop-down of the quick access bar */
    .menu { position: absolute; top: 20px; left: 0; width: 227px; margin: 0; padding: 0 0 1px; background: #747474; border: 1px solid #9a9a9a; border-top-color: #444; box-shadow: 2px 2px 2px #0006; color: #f0f0f0; display: flex; flex-direction: column; }
    .menu h2 { margin: 0; height: 14px; font: inherit; line-height: 13px; padding: 0 3px; background: #565656; border-bottom: 1px solid #a5a5a5; white-space: nowrap; }
    .menu button { height: 20px; justify-content: flex-start; padding-left: 8px; white-space: nowrap; overflow: hidden; }
    .mark { width: 15px; flex: none; display: flex; }
    .check { width: 10px; height: 10px; }
    .rule { height: 2px; margin: 1px 0; background: #a2a2a2; }
    .menu .hot { background: linear-gradient(#5d5d5d, #888); border: 1px solid #3c3c3c; padding-left: 7px; }
    .menu .faint { color: #6e6e6e; }
    .tip { position: absolute; left: 200px; top: 320px; width: 185px; background: #f0f0f0; color: #484848; border: 1px solid #cfcfcf; font-weight: 700; }
    .tip p { margin: 0; height: 23px; line-height: 23px; padding: 0 4px; white-space: nowrap; }
    .tip p + p { border-top: 1px solid #bbb; }
  `;

  private chevron() {
    return html`<svg class="chev" viewBox="0 0 8 5"><path d="M.5 .5L4 4L7.500 .5" fill="none" stroke="#777" stroke-width="1.300"></path></svg>`;
  }

  private renderMenu() {
    return html`
      <div class="menu" role="menu">
        <h2>Personalizza barra degli strumenti Accesso rapido</h2>
        ${QUICK_ACCESS.map(
          (i) => html`<button role="menuitemcheckbox" aria-checked=${i.on ? "true" : "false"}>
            <span class="mark">${i.on ? CHECK : nothing}</span>${i.text}
          </button>`
        )}
        <div class="rule"></div>
        <button role="menuitem" class="hot"><span class="mark"></span>Altri comandi...</button>
        <button role="menuitem"><span class="mark"></span>Nascondi barra dei menu</button>
        <button role="menuitem" class="faint" disabled><span class="mark"></span>Mostra sotto la barra multifunzione</button>
        <div class="tip" role="tooltip">
          <p>Altri comandi...</p>
          <p>Premere F1 per ulteriori informazioni</p>
        </div>
      </div>`;
  }

  private renderHead() {
    return html`
      <header class="head">
        <button class="app" aria-label="Menu applicazione">
          <svg class="logo" viewBox="0 0 21 26">
            <path d="M8 1H14L20 24L14 22L12 15L7 17L5 22L0 23Z" fill="#c8281c"></path>
            <path d="M10 7L12 13L8 14Z" fill="#7d7d7d"></path>
            <path d="M8 1L10 7L5 22L0 23Z" fill="#e2503a"></path>
            <path d="M14 1L20 24L16 22L11 4Z" fill="#8e1510"></path>
          </svg>
          ${DOWN}
        </button>
        <div class="title">
          <div class="quick">${tools("nuovo apri salva salvaNome stampa annulla v ripetiOff v gruppo riga calc foglio")}</div>
          <label class="work">${icon("ingranaggio")}
            <select aria-label="Area di lavoro"><option>Stefano 2017</option></select>${DOWN}
          </label>
          <div class="anchor">
            <button class="custom" aria-label="Personalizza" aria-expanded="true">${DOWN}</button>
            ${this.renderMenu()}
          </div>
          <h1 class="file">Disegno1.dwg</h1>
          <button class="play" aria-label="Espandi">▶</button>
          <input class="search" aria-label="Cerca" placeholder="Digitare parola chiave o frase" />
          <div class="user">
            ${tools("binocolo utente")}
            <button class="sign">Accedi</button>
            ${tools("v exchange a360 v | aiuto v")}
          </div>
          <div class="win">
            <button aria-label="Riduci"><svg viewBox="0 0 11 11"><path d="M1 5.500H10" stroke="currentColor"></path></svg></button>
            <button aria-label="Ripristina"><svg viewBox="0 0 11 11"><path d="M2.500 2.500H8.500V9.500H2.500ZM4.500 2.500V1H10V7.500H8.500" fill="none" stroke="currentColor"></path></svg></button>
            <button aria-label="Chiudi"><svg viewBox="0 0 11 11"><path d="M1 1L10 10M10 1L1 10" stroke="currentColor"></path></svg></button>
          </div>
        </div>
        <nav class="bar">
          ${MENU_BAR.map((m) => html`<button>${m}</button>`)}
          <span class="under"></span>
          <button>Finestra</button><button>?</button>
          <div class="child">
            <button aria-label="Riduci disegno"><svg viewBox="0 0 11 11"><path d="M1 8H9" stroke="currentColor" stroke-width="2"></path></svg></button>
            <button aria-label="Ripristina disegno"><svg viewBox="0 0 11 11"><path d="M1 5H7V10H1ZM4 5V1.500H10V7H7" fill="none" stroke="currentColor" stroke-width="1.500"></path></svg></button>
            <button aria-label="Chiudi disegno"><svg viewBox="0 0 11 11"><path d="M2 2L9 9M9 2L2 9" stroke="currentColor" stroke-width="2.200"></path></svg></button>
          </div>
        </nav>
      </header>
      <div class="docs">
        <button class="doc">Disegno1*${icon("chiudi")}</button>
        <button class="add" aria-label="Nuovo disegno">+</button>
      </div>`;
  }

  private renderToolbars() {
    return html`
      <div class="row row1">
        <div class="set main grow">
          ${tools("nuovo apri salva chiudiDis | stampa anteprima | taglia copia incolla proprietaCopia | annulla v ripeti v | zoomReal zoomFin zoomPrec | propr centro tavolozze | fogliSet")}
          <span class="grow"></span>
        </div>
        <div class="set right">
          ${tools("ucs ucsPrec | ucsFaccia ucsOgg ucsVista | ucsOrig ucsZ ucs3 | rotX rotY rotZ | ucsAppl")}
        </div>
        <div class="set right">${tools("dist raggio angolo area volume")}</div>
        <div class="set right">${tools("wire2d wire3d nascosto realistico concettuale | gestVis")}</div>
      </div>
      <div class="row row2">
        <div class="set wide">
          ${tools("layer")}
          <label class="combo">
            ${["lampada", "sole", "congela", "lucchetto"].map(icon)}<span class="swatch"></span>
            <select aria-label="Layer"><option>0</option></select>${this.chevron()}
          </label>
          ${tools("layOgg layPrec layStati")}
        </div>
        <div class="triple">
          <label class="combo"><span class="swatch"></span><select aria-label="Colore"><option>DaLayer</option></select></label>
          <label class="combo"><select aria-label="Tipo di linea"><option>DaLayer</option></select></label>
          <label class="combo late"><select aria-label="Spessore di linea"><option>DaLayer</option></select>${this.chevron()}</label>
        </div>
        <label class="combo off"><select disabled aria-label="Stile di stampa"><option>DaColore</option></select>${this.chevron()}</label>
        <div class="set right">
          ${tools("tratteggioEd polEd | xr dwf dwfx dgn pdf immagine nuvola | blocco export | ritaglio")}
        </div>
        <div class="set right">${tools("orbita orbita2 orbita3")}</div>
      </div>`;
  }

  private renderPlan() {
    return html`
      <svg class="plan" role="img" aria-label="Disegno">
        ${door(237, 77, 37)}${door(324, 77, 39)}${door(237, 131, 37)}${door(323, 132, 39)}
        <g fill="#f0f0f0" font-size="14"><text x="245" y="152">70</text><text x="333" y="152">75</text></g>
        ${slide(236, 162, 34, 3)}${slide(236, 183, 34, 2)}${slide(324, 162, 40, 3)}${slide(324, 183, 40, 2)}
        <g fill="none" stroke="#6b7278" stroke-dasharray="4 2"><path d="M260 225.500H302"></path><path d="M260 232.500H302" stroke-dasharray="6 3"></path></g>
        <g fill="none" stroke="#d21f1a">
          <rect x="310" y="203" width="9" height="6"></rect><circle cx="314" cy="206" r="2"></circle>
          <path d="M325 202h4v3h-4zM330 202h3v3h-3zM327 208h3v2h-3z"></path>
          <path d="M315 221V244M322 221V244" stroke-dasharray="3 2"></path>
          <rect x="377" y="202" width="4" height="5" stroke="#c64a30"></rect><rect x="369" y="211" width="4" height="7"></rect>
          <circle cx="367" cy="230" r="3"></circle><path d="M607 190h8l-3-2" stroke-width="2"></path>
        </g>
        <g fill="#dd2018"><rect x="335" y="228" width="7" height="4"></rect><rect x="348" y="229" width="6" height="3"></rect><rect x="367" y="227" width="2" height="6"></rect><rect x="363" y="213" width="3" height="3"></rect></g>
        <g fill="#7c7470" stroke="#b0503a" stroke-width="1"><rect x="361" y="200" width="6" height="5"></rect><rect x="372" y="201" width="4" height="4"></rect><path d="M350 200h4v12l-2 3-2-6z" fill="none"></path></g>
        <g fill="#7a2018" font-size="14"><text x="254" y="275">Nome cliente - app</text><text x="254" y="291">Cantiere - Comune</text><text x="254" y="307">Rilievo al rustico</text></g>
        <g fill="#6e1d16" font-size="6"><text x="460" y="283">REI = VISI</text><text x="460" y="292">Telaio esterno = 270 cf</text><text x="460" y="301">Telaio interno = 80 cf</text><text x="460" y="311">tamponata</text></g>
        <path d="M560 76.500H664" stroke="#3f9a4a"></path>
        <g fill="none" stroke="#6f8fc8"><path d="M580 101.500H668L624 144Z" fill="#24406e"></path><path d="M588 105.500H660L624 139Z" fill="#212830"></path></g>
        <g fill="none" stroke="#5c7076"><rect x="598" y="198" width="22" height="5"></rect><path d="M600 203V219C602 231 616 231 619 219V203M604 207V218C606 225 613 225 615 218V211C613 205 606 205 604 209"></path><circle cx="610" cy="215" r="3"></circle>
          <rect x="647" y="202" width="13" height="7"></rect><path d="M650 204v4h3v-4zM655 204h3v4h-2M684 235c0-4 1-5 4-5" stroke-width="1.500"></path></g>
        <g fill="none" stroke="#56696c"><rect x="576.500" y="276.500" width="43" height="35" stroke-width="2"></rect><rect x="580.500" y="279.500" width="35" height="28"></rect>
          <g stroke="#aab0b4" stroke-dasharray="1.500 2"><path d="M583 283H614M584 286H614M583 289H614M584 292H614M583 295H614M584 298H614M583 301H614M584 304H614"></path></g></g>
      </svg>`;
  }

  private renderWork() {
    return html`
      <div class="mid">
        <div class="cols l">
          <div class="col">
            <div class="set stretch">${tools("linea polilinea poligono rettangolo arco cerchio rev spline ellisse arcoEll tratteggio insBlocco creaBlocco regione lineaC confine confine2 copertura tabella A")}</div>
            <div class="set">${tools("aggSel | scorri assi")}</div>
          </div>
          <div class="col">
            <div class="set stretch">${tools("cancella copiaO specchio offset serie sposta ruota scala stira taglia2 estendi spezza unisci cima raccorda fusione esplodi")}</div>
            <div class="set">${tools("ordine1 ordine2 ordine3 ordine4 | ordTesto ordTratt")}</div>
          </div>
        </div>
        <main class="canvas">
          ${this.renderPlan()}
          <div class="view">[−][Alto][Wireframe 2D]</div>
          <svg class="axes" viewBox="0 0 70 68">
            <path d="M6 20V57M10 61.500H47M2 57.500H10V65.500H2ZM6 57V61.500H10" fill="none" stroke="#c4c9cd" stroke-width="1.300"></path>
            <path d="M8 5L13 11L18 5M13 11V17M51 49L62 61M62 49L51 61" fill="none" stroke="#b4b9bd" stroke-width="1.200"></path>
          </svg>
          <svg class="cube" viewBox="0 0 68 72" font-weight="700" text-anchor="middle">
            <circle cx="35" cy="35" r="26" fill="none" stroke="#47525d" stroke-width="6"></circle>
            <rect x="23" y="23" width="24" height="24" fill="#bfc1c2" stroke="#d5d6d6"></rect>
            <text x="35" y="38" font-size="6" fill="#666">ALTO</text>
            <g fill="#b6bbbf" font-size="10"><text x="35" y="13">N</text><text x="35" y="67">S</text><text x="8" y="39">O</text></g>
          </svg>
          <aside class="palette">
            <button aria-label="Chiudi tavolozza">${icon("chiudi")}</button>
            <button aria-label="Nascondi automaticamente">${icon("pin")}</button>
            <button aria-label="Impostazioni">${icon("ingranaggio")}</button>
            <span class="vert">PROPRIETÀ</span>
            ${icon("pannello")}
          </aside>
        </main>
        <div class="cols r">
          <div class="col first">
            <div class="set stretch">${tools("unione sottrai interseca | estrFaccia spostaFaccia offFaccia elimFaccia ruotaFaccia rastrema copiaFaccia coloraFaccia | raccSp cimaSp copiaSp colSp | imprimi pulisci separa guscio verifica | estraiIso torsione")}</div>
          </div>
          <div class="col">
            <div class="set stretch">${tools("polisolido box cuneo cono sfera cilindro toro piramide elica planare | estrudi premi sweep rivoluz loft seziona ispess piega solidoSup | gizmo1 gizmo2 lPiccola mesh")}</div>
          </div>
        </div>
      </div>`;
  }

  private renderFoot() {
    const cells = ["griglia snap v", "orto polare v iso v", "otrack osnap v", "annA annB annC #", "opzioni v", "piu", "unita v", "isola", "gpu", "schermo menu"];
    return html`
      <section class="cmd">
        <div class="grip">${icon("chiudi")}${icon("chiave")}</div>
        <div class="hist"><div>Comando:</div><div>Comando:</div><div>Comando:</div></div>
        <div class="line">
          <button class="prompt" aria-label="Comandi recenti">&gt;_</button>${DOWN}
          <input aria-label="Riga di comando" placeholder="Digitare un comando" />
        </div>
      </section>
      <footer class="foot">
        ${["Modello", "Layout1", "Layout2"].map((s, i) => html`<button class=${classMap({ sheet: true, on: i === 0 })}>${s}</button>`)}
        <button class="sheet plus" aria-label="Nuovo layout">+</button>
        <div class="status">
          <button class="model">MODELLO</button>
          ${cells.map(
            (c) => html`<div class="cell">
              ${tools(c.replace(" #", ""))}
              ${c.endsWith("#") ? html`<button class="scale">1:1${DOWN}</button>` : nothing}
            </div>`
          )}
        </div>
      </footer>`;
  }

  render() {
    return html`${this.renderHead()}${this.renderToolbars()}${this.renderWork()}${this.renderFoot()}`;
  }
}
